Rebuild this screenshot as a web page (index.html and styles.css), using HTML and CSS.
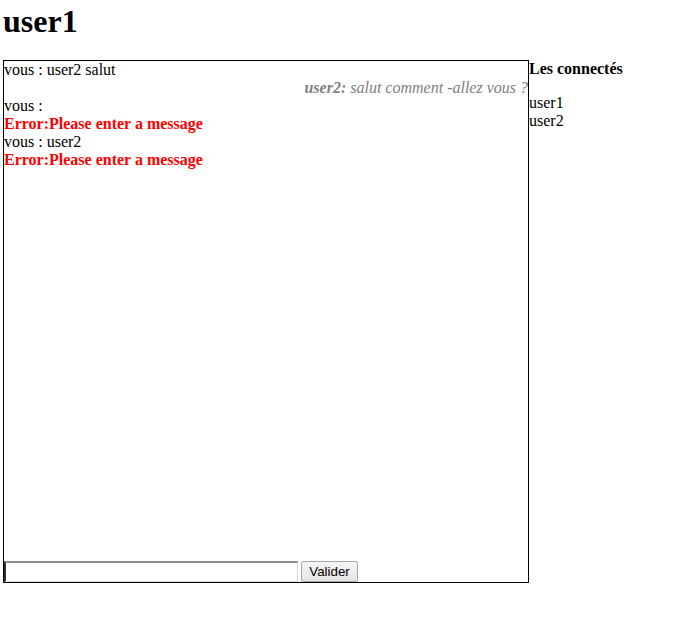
FILE: index.html
```html
<!DOCTYPE html>
<html lang="fr">
<head>
<meta charset="utf-8">
<title>Chat</title>
<link rel="stylesheet" href="styles.css">
</head>
<body>
<h1 class="title">user1</h1>
<div class="layout">
  <div class="chat">
    <div class="messages">
      <div class="line">vous : user2 salut</div>
      <div class="line incoming"><b>user2:</b> salut comment -allez vous ?</div>
      <div class="line">vous :</div>
      <div class="line error">Error:Please enter a message</div>
      <div class="line">vous : user2</div>
      <div class="line error">Error:Please enter a message</div>
    </div>
    <form class="form">
      <input class="field" type="text"> <button class="btn" type="button">Valider</button>
    </form>
  </div>
  <div class="users">
    <div class="users-title">Les connectés</div>
    <div class="user">user1</div>
    <div class="user">user2</div>
  </div>
</div>
</body>
</html>
```
FILE: styles.css
```css
body {
  margin: 3px;
  font-family: "Liberation Serif", "Times New Roman", serif;
  font-size: 16px;
  line-height: 18px;
  color: #000;
  background: #fff;
}
.title {
  margin: 0 0 21px;
  font-size: 32px;
  line-height: 36px;
  font-weight: bold;
}
.layout {
  display: flex;
  align-items: flex-start;
}
.chat {
  width: 524px;
  height: 521px;
  border: 1px solid #000;
  display: flex;
  flex-direction: column;
}
.messages {
  flex: 1;
}
.incoming {
  text-align: right;
  font-style: italic;
  color: #808080;
}
.error {
  color: #ff0000;
  font-weight: bold;
}
.form {
  margin: 0;
  line-height: 21px;
  display: flex;
  align-items: flex-end;
  gap: 3px;
}
.field {
  box-sizing: border-box;
  width: 294px;
  height: 21px;
  margin: 0;
  padding: 1px 2px;
  border-style: solid;
  border-width: 2px 1px 1px 2px;
  border-color: #8a8a8a #d8d8d8 #e0e0e0 #303030;
  font-family: "Liberation Sans", Arial, sans-serif;
  font-size: 13.33px;
  background: #fff;
}
.btn {
  box-sizing: border-box;
  height: 21px;
  width: 57px;
  margin: 0;
  padding: 0 6px;
  border: 1px solid #a9a9a9;
  border-radius: 2px;
  background: linear-gradient(#f6f6f6, #e4e4e4);
  font-family: "Liberation Sans", Arial, sans-serif;
  font-size: 13.33px;
  color: #000;
}
.users-title {
  font-weight: bold;
  margin-bottom: 16px;
}
.user {
  line-height: 18px;
}
```
